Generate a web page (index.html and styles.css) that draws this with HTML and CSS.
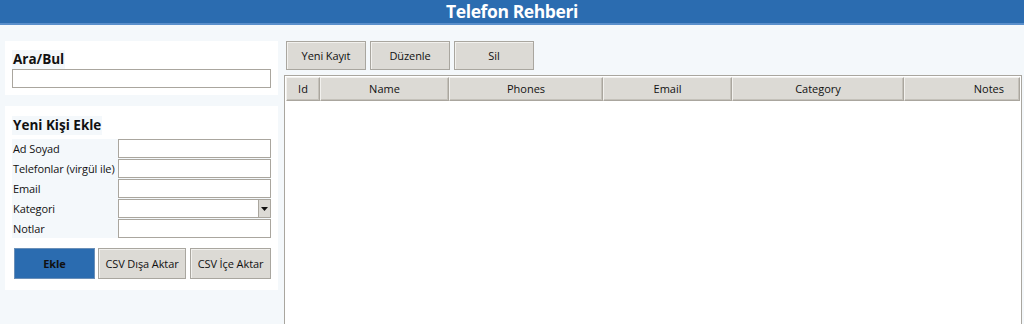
FILE: index.html
```html
<!DOCTYPE html>
<html>
<head>
<meta charset="utf-8">
<link rel="stylesheet" href="styles.css">
</head>
<body>
<header class="topbar">Telefon Rehberi</header>
<main class="layout">
  <aside class="side">
    <section class="panel search">
      <h2 class="ptitle">Ara/Bul</h2>
      <input class="field wide" type="text">
    </section>
    <section class="panel add">
      <h2 class="ptitle">Yeni Kişi Ekle</h2>
      <div class="form">
        <label class="lbl">Ad Soyad</label><input class="field" type="text">
        <label class="lbl">Telefonlar (virgül ile)</label><input class="field" type="text">
        <label class="lbl">Email</label><input class="field" type="text">
        <label class="lbl">Kategori</label>
        <div class="field combo"><span class="arrow"><svg width="7" height="4" viewBox="0 0 7 4"><path d="M0 0H7L3.5 4Z" fill="#111"/></svg></span></div>
        <label class="lbl">Notlar</label><input class="field" type="text">
      </div>
      <div class="actions">
        <button class="btn primary">Ekle</button>
        <button class="btn">CSV Dışa Aktar</button>
        <button class="btn">CSV İçe Aktar</button>
      </div>
    </section>
  </aside>
  <section class="content">
    <div class="toolbar">
      <button class="btn tb">Yeni Kayıt</button>
      <button class="btn tb">Düzenle</button>
      <button class="btn tb">Sil</button>
    </div>
    <div class="table">
      <div class="thead">
        <div class="th c-id">Id</div>
        <div class="th c-name">Name</div>
        <div class="th c-phones">Phones</div>
        <div class="th c-email">Email</div>
        <div class="th c-cat">Category</div>
        <div class="th c-notes">Notes</div>
      </div>
      <div class="tbody"></div>
    </div>
  </section>
</main>
</body>
</html>
```
FILE: styles.css
```css
* { box-sizing: border-box; }
html, body { margin: 0; padding: 0; }
body {
  width: 1024px;
  height: 324px;
  overflow: hidden;
  background: #f4f8fb;
  font-family: "Open Sans", "Noto Sans", sans-serif;
  font-size: 11px;
  color: #111;
}
.topbar {
  height: 25px;
  background: #2b6cb0;
  border-bottom: 2px solid #5a8fcb;
  color: #fff;
  font-weight: 700;
  font-size: 17.5px;
  line-height: 23px;
  text-align: center;
  letter-spacing: -0.4px;
}
.layout {
  display: flex;
  padding: 16px 2px 0 5px;
  gap: 6px;
  height: 299px;
}
.side {
  width: 273px;
  display: flex;
  flex-direction: column;
  gap: 11px;
  flex: none;
}
.panel {
  background: #fff;
  padding: 9px 7px 0 7px;
}
.panel.search { height: 54px; }
.panel.add { height: 184px; padding-top: 10px; }
.ptitle {
  margin: 0;
  display: inline-block;
  background: #f4f8fb;
  font-size: 13.5px;
  font-weight: 700;
  line-height: 19px;
  padding: 0 1px;
  vertical-align: top;
}
.field {
  display: block;
  height: 19px;
  border: 1px solid #aaa69e;
  background: #fff;
  margin: 0;
  padding: 0;
  width: 100%;
}
.field.wide { width: 259px; }
.form {
  display: grid;
  grid-template-columns: 106px 153px;
  row-gap: 1px;
  background: #f4f8fb;
  margin-top: 4px;
  width: 259px;
}
.lbl {
  line-height: 19px;
  padding-left: 1px;
  white-space: nowrap;
  font-size: 11px;
  letter-spacing: -0.1px;
}
.combo { position: relative; }
.arrow {
  position: absolute;
  right: 0;
  top: 0;
  width: 12px;
  height: 17px;
  background: #dcdad5;
  border-left: 1px solid #aaa69e;
  display: flex;
  align-items: center;
  justify-content: center;
}
.actions {
  display: flex;
  gap: 3px;
  margin-top: 10px;
  padding-left: 2px;
}
.btn {
  font-family: inherit;
  font-size: 11px;
  letter-spacing: -0.1px;
  color: #111;
  background: #dcdad5;
  border: 1px solid #a9a69f;
  box-shadow: inset 1px 1px 0 #f2f1ee;
  height: 31px;
  padding: 0;
  margin: 0;
}
.actions .btn { width: 88px; }
.actions .btn:nth-child(3) { width: 81px; margin-left: 1px; }
.btn.primary {
  width: 81px;
  background: #2b6cb0;
  border-color: #6a8fb8;
  font-weight: 700;
  box-shadow: none;
}
.content {
  flex: 1;
  display: flex;
  flex-direction: column;
  gap: 5px;
  padding-left: 1px;
}
.toolbar {
  display: flex;
  gap: 4px;
  padding-left: 1px;
}
.btn.tb { width: 80px; height: 29px; }
.table {
  flex: 1;
  border: 1px solid #a9a69f;
  border-bottom: 0;
  background: #fff;
  padding: 1px 1px 0 1px;
  margin-left: -1px;
}
.thead {
  display: flex;
  height: 24px;
}
.th {
  background: #dcdad5;
  border: 1px solid #aaa69e;
  border-top-color: #f2f1ee;
  border-left-color: #f2f1ee;
  box-shadow: inset -1px -1px 0 #c4c1ba;
  line-height: 22px;
  text-align: center;
  font-size: 11px;
  flex: none;
}
.c-id { width: 34px; }
.c-name { width: 129px; }
.c-phones { width: 154px; }
.c-email { width: 129px; }
.c-cat { width: 172px; }
.c-notes { flex: 1; text-align: right; padding-right: 15px; }
.tbody { background: #fff; }
```
